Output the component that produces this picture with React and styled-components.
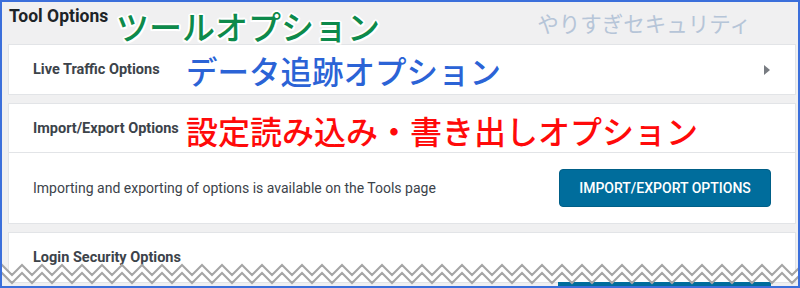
import React from 'react';
import styled, { createGlobalStyle } from 'styled-components';

const GlobalStyle = createGlobalStyle`
  html, body { margin: 0; padding: 0; background: #fff; }
  * { box-sizing: border-box; }
`;

const cards = [
  { title: 'Live Traffic Options', note: 'データ追跡オプション', noteColor: '#2b63d6', caret: true },
  {
    title: 'Import/Export Options',
    note: '設定読み込み・書き出しオプション',
    noteColor: '#ff0a0a',
    noteSize: 32,
    body: 'Importing and exporting of options is available on the Tools page',
    action: 'IMPORT/EXPORT OPTIONS',
  },
  { title: 'Login Security Options' },
];

export default function App() {
  return (
    <>
      <GlobalStyle />
      <Frame>
        <PageHeader>
          <PageTitle>Tool Options</PageTitle>
          <Caption>ツールオプション</Caption>
          <Brand>やりすぎセキュリティ</Brand>
        </PageHeader>
        {cards.map((c) => (
          <Card key={c.title}>
            <CardHeader divided={!!c.body}>
              <CardTitle>{c.title}</CardTitle>
              {c.note && (
                <Note color={c.noteColor} size={c.noteSize || 31.5}>
                  {c.note}
                </Note>
              )}
              {c.caret && <Caret />}
            </CardHeader>
            {c.body && (
              <CardBody>
                <BodyText>{c.body}</BodyText>
                <Button>{c.action}</Button>
              </CardBody>
            )}
          </Card>
        ))}
        <Tear viewBox="0 0 796 24" preserveAspectRatio="none">
          <rect x="556" y="20" width="213" height="4" fill="#006d9c" />
          <path d={zig(3) + zigBack(11)} fill="#fff" />
          <path d={zig(3)} fill="none" stroke="#a5a5a5" strokeWidth="2" />
          <path d={zig(11)} fill="none" stroke="#a5a5a5" strokeWidth="2" />
        </Tear>
      </Frame>
    </>
  );
}

// zigzag from left to right, a peak every 20px, 10px deep
function zig(top) {
  let d = `M-10 ${top + 10}`;
  for (let x = 0; x <= 800; x += 20) {
    d += ` L${x} ${top} L${x + 10} ${top + 10}`;
  }
  return d;
}

function zigBack(top) {
  let d = '';
  for (let x = 800; x >= 0; x -= 20) {
    d += ` L${x + 10} ${top + 10} L${x} ${top}`;
  }
  return d + ` L-10 ${top + 10} Z`;
}

const Frame = styled.div`
  position: relative;
  width: 800px;
  height: 288px;
  overflow: hidden;
  border: 2px solid #3b6fdb;
  background: #f0f0f1;
  padding: 0 2px 0 6px;
  font-family: Roboto, "Liberation Sans", sans-serif;
  color: #3c434a;
`;

const PageHeader = styled.div`
  display: flex;
  align-items: flex-start;
  height: 42px;
`;

const PageTitle = styled.div`
  font-size: 17.5px;
  font-weight: 700;
  line-height: 1;
  color: #1d2327;
  padding: 6px 0 0 1px;
  width: 108px;
`;

const Caption = styled.div`
  font-family: "Noto Sans CJK JP", sans-serif;
  font-size: 33px;
  font-weight: 500;
  line-height: 1;
  color: #0d8a4b;
  margin-top: 8px;
  text-shadow: 2px 0 #fff, -2px 0 #fff, 0 2px #fff, 0 -2px #fff,
    1.5px 1.5px #fff, -1.5px 1.5px #fff, 1.5px -1.5px #fff, -1.5px -1.5px #fff;
`;

const Brand = styled.div`
  margin-left: auto;
  margin-right: 45px;
  margin-top: 10px;
  font-family: "Noto Sans CJK JP", sans-serif;
  font-size: 21.5px;
  line-height: 1;
  color: #b6c5d8;
`;

const Card = styled.div`
  background: #fff;
  border: 1px solid #e2e4e7;
  margin-bottom: 8px;
`;

const CardHeader = styled.div`
  display: flex;
  align-items: center;
  height: 49px;
  padding: 0 24px;
  border-bottom: ${(p) => (p.divided ? '1px solid #e2e4e7' : 'none')};
`;

const CardTitle = styled.div`
  flex: 0 0 153px;
  font-size: 14.5px;
  font-weight: 700;
  color: #3c434a;
`;

const Note = styled.div`
  font-family: "Noto Sans CJK JP", sans-serif;
  font-size: ${(p) => p.size}px;
  font-weight: 500;
  line-height: 1;
  white-space: nowrap;
  color: ${(p) => p.color};
  margin-top: 3px;
`;

const Caret = styled.span`
  margin-left: auto;
  margin-right: 1px;
  width: 0;
  height: 0;
  border-top: 5px solid transparent;
  border-bottom: 5px solid transparent;
  border-left: 6px solid #787c82;
`;

const CardBody = styled.div`
  display: flex;
  align-items: center;
  justify-content: space-between;
  padding: 16px 24px;
`;

const BodyText = styled.div`
  font-size: 14px;
  color: #3c434a;
`;

const Button = styled.button`
  width: 212px;
  height: 38px;
  border: 1px solid #005f87;
  border-radius: 4px;
  background: #006d9c;
  color: #fff;
  font-family: Roboto, "Liberation Sans", sans-serif;
  font-size: 14px;
  font-weight: 500;
  cursor: pointer;
`;

const Tear = styled.svg`
  position: absolute;
  left: 0;
  bottom: 0;
  width: 796px;
  height: 24px;
`;
